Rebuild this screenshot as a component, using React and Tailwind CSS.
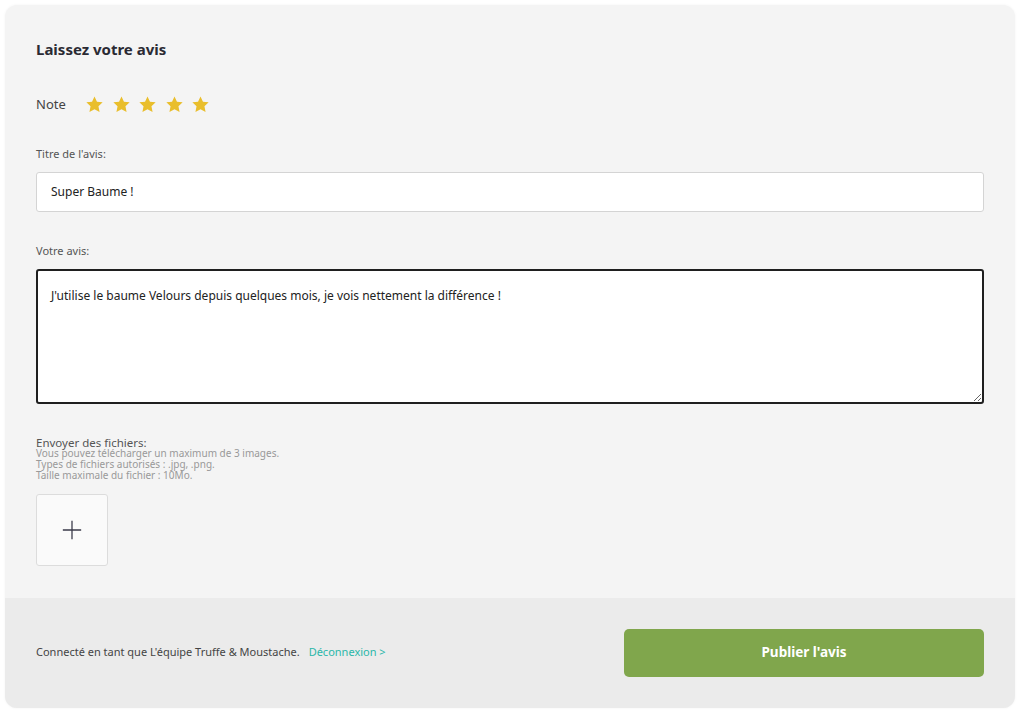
import React, { useState } from 'react';

const Star = () => (
  <svg viewBox="0 0 24 24" className="w-[19px] h-[19px]" fill="#e9be2c">
    <path d="M12 1.8l3.1 6.6 7.2.9-5.3 5 1.4 7.1L12 17.9l-6.4 3.5L7 14.3 1.7 9.3l7.2-.9z" />
  </svg>
);

const App = () => {
  const [title, setTitle] = useState('Super Baume !');
  const [body, setBody] = useState(
    "J'utilise le baume Velours depuis quelques mois, je vois nettement la différence !"
  );

  return (
    <div className="min-h-screen bg-white p-[5px] pr-[9px] font-['Noto_Sans',sans-serif]">
      <div className="rounded-[12px] overflow-hidden bg-[#f4f4f4] shadow-[0_0_3px_rgba(0,0,0,0.05)]">
        <div className="px-[31px] pt-[33px] pb-[32px]">
          <h2 className="text-[15px] font-bold text-[#2a2a33] leading-[22px]">Laissez votre avis</h2>

          <div className="flex items-center mt-[35px]">
            <span className="text-[13px] text-[#444] w-[49px]">Note</span>
            <div className="flex gap-[7.5px]">
              <Star />
              <Star />
              <Star />
              <Star />
              <Star />
            </div>
          </div>

          <label className="block mt-[31px] text-[11px] text-[#555] leading-[16px]">Titre de l'avis:</label>
          <input
            value={title}
            onChange={(e) => setTitle(e.target.value)}
            className="mt-[10px] block w-full h-[40px] bg-white border border-[#d4d4d4] rounded-[3px] px-[14px] text-[12px] text-[#222] outline-none"
          />

          <label className="block mt-[31px] text-[11px] text-[#555] leading-[16px]">Votre avis:</label>
          <textarea
            value={body}
            onChange={(e) => setBody(e.target.value)}
            className="mt-[10px] block w-full h-[135px] bg-white border-2 border-[#1f1f1f] rounded-[3px] px-[13px] pt-[16px] text-[12px] text-[#222] outline-none resize-y"
          />

          <div className="mt-[33px] leading-[11px]">
            <div className="text-[11.5px] text-[#555]">Envoyer des fichiers:</div>
            <div className="text-[10px] text-[#999]">Vous pouvez télécharger un maximum de 3 images.</div>
            <div className="text-[10px] text-[#999]">Types de fichiers autorisés : .jpg, .png.</div>
            <div className="text-[10px] text-[#999]">Taille maximale du fichier : 10Mo.</div>
          </div>

          <button className="mt-[13px] w-[72px] h-[72px] flex items-center justify-center bg-[#fafafa] border border-[#dcdcdc] rounded-[3px]">
            <svg viewBox="0 0 24 24" className="w-[22px] h-[22px]" stroke="#3a3a4a" strokeWidth="1.4" fill="none">
              <path d="M12 2v20M2 12h20" />
            </svg>
          </button>
        </div>

        <div className="bg-[#ebebeb] h-[110px] px-[31px] flex items-center justify-between">
          <div className="text-[11px] text-[#444]">
            Connecté en tant que L'équipe Truffe &amp; Moustache.
            <a href="#" className="ml-[9px] text-[#2ab7a9]">Déconnexion &gt;</a>
          </div>
          <button className="w-[360px] h-[48px] rounded-[5px] bg-[#80a64c] text-white text-[13.5px] font-bold">
            Publier l'avis
          </button>
        </div>
      </div>
    </div>
  );
};

export default App;
